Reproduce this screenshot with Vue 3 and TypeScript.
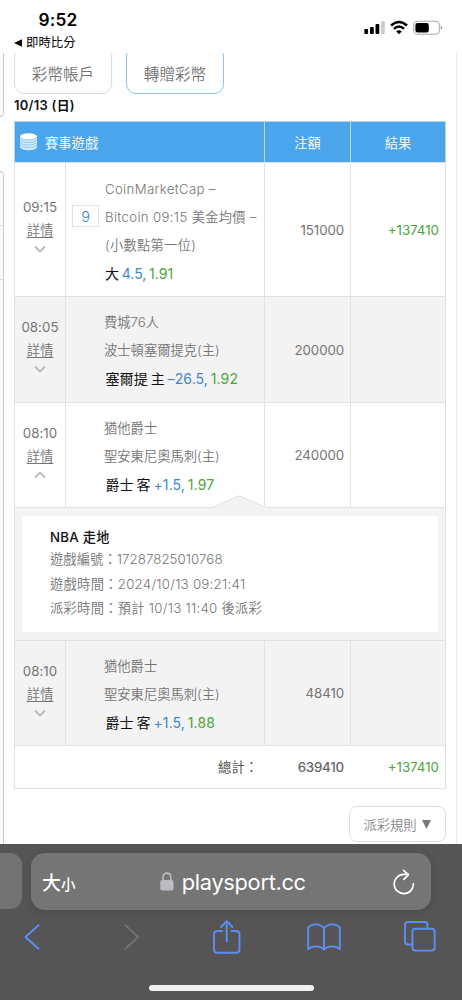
<script setup lang="ts">
import { ref, computed } from 'vue'

type Bet = {
  id: number
  time: string
  no?: string
  lines: string[]
  pick: string
  line: string
  odds: string
  amount: number
  result?: string
  shaded: boolean
}

const bets: Bet[] = [
  { id: 1, time: '09:15', no: '9', lines: ['CoinMarketCap –', 'Bitcoin 09:15 美金均價 –', '(小數點第一位)'], pick: '大', line: '4.5,', odds: '1.91', amount: 151000, result: '+137410', shaded: false },
  { id: 2, time: '08:05', lines: ['費城76人', '波士頓塞爾提克(主)'], pick: '塞爾提 主', line: '–26.5,', odds: '1.92', amount: 200000, shaded: true },
  { id: 3, time: '08:10', lines: ['猶他爵士', '聖安東尼奧馬刺(主)'], pick: '爵士 客', line: '+1.5,', odds: '1.97', amount: 240000, shaded: false },
  { id: 4, time: '08:10', lines: ['猶他爵士', '聖安東尼奧馬刺(主)'], pick: '爵士 客', line: '+1.5,', odds: '1.88', amount: 48410, shaded: true }
]

const info = [
  { label: '遊戲編號：', value: '17287825010768' },
  { label: '遊戲時間：', value: '2024/10/13 09:21:41' },
  { label: '派彩時間：', value: '預計 10/13 11:40 後派彩' }
]

const openId = ref<number | null>(3)
const total = computed(() => bets.reduce((sum, b) => sum + b.amount, 0))

function toggle(id: number) {
  openId.value = openId.value === id ? null : id
}
</script>

<template>
  <div class="phone">
    <header class="status">
      <div class="status-left">
        <div class="clock">9:52</div>
        <div class="back-app">
          <svg width="8" height="8" viewBox="0 0 8 8"><path d="M0 4 8 0.3V7.7Z" fill="#000" /></svg>
          <span>即時比分</span>
        </div>
      </div>
      <svg class="status-icons" width="80" height="16" viewBox="0 0 80 16">
        <rect x="0.3" y="9" width="3.8" height="5" rx="1" />
        <rect x="6" y="7" width="3.8" height="7" rx="1" />
        <rect x="11.5" y="4" width="3.8" height="10" rx="1" />
        <rect x="17" y="1.2" width="3.8" height="12.8" rx="1" fill="#ccc" />
        <g fill="none" stroke="#000" stroke-width="2.5">
          <path d="M27 5.5Q35 -1.6 43 5.5" />
          <path d="M30 8.8Q35 4.2 40 8.8" />
        </g>
        <path d="M35 14.3 32.2 11.4Q35 9.1 37.8 11.4Z" />
        <rect x="49.7" y="1.2" width="25.6" height="13" rx="3.8" fill="none" stroke="#aaa" stroke-width="1.1" />
        <rect x="51.4" y="2.9" width="13.4" height="9.6" rx="2.2" />
        <path d="M76.6 5.4Q79.6 7.5 76.6 9.8Z" fill="#999" />
      </svg>
    </header>

    <main class="page">
      <aside class="edge">
        <div class="edge-box top"></div>
        <div class="edge-box rest">
          <i></i>
          <i></i>
        </div>
      </aside>

      <section class="content">
        <div class="tabs">
          <button class="tab">彩幣帳戶</button>
          <button class="tab active">轉贈彩幣</button>
        </div>
        <h2 class="date">10/13 (日)</h2>

        <div class="table">
          <div class="row head">
            <div class="cell title">
              <svg width="17" height="18" viewBox="0 0 17 18">
                <path d="M0 3.2V13.8C0 18.4 17 18.4 17 13.8V3.2Z" fill="#d6ebfb" />
                <ellipse cx="8.5" cy="3.4" rx="8.5" ry="3.2" fill="#fff" />
                <g fill="none" stroke="#6fb7ef" stroke-width="0.7">
                  <path d="M0 4C1 8 16 8 17 4" />
                  <path d="M0 6.5C1 10.5 16 10.5 17 6.5" />
                  <path d="M0 9C1 13 16 13 17 9" />
                  <path d="M0 11.5C1 15.5 16 15.5 17 11.5" />
                </g>
              </svg>
              <span>賽事遊戲</span>
            </div>
            <div class="cell">注額</div>
            <div class="cell">結果</div>
          </div>

          <template v-for="b in bets" :key="b.id">
            <div class="row bet" :class="{ shaded: b.shaded, tall: b.no }">
              <div class="cell when" @click="toggle(b.id)">
                <span class="time">{{ b.time }}</span>
                <span class="more">詳情</span>
                <svg class="chevron" width="12" height="8" viewBox="0 0 12 8">
                  <path :d="openId === b.id ? 'M1 6.5 6 1.5 11 6.5' : 'M1 1.5 6 6.5 11 1.5'" />
                </svg>
              </div>
              <div class="cell game">
                <div class="no-col"><span v-if="b.no" class="no">{{ b.no }}</span></div>
                <div class="lines">
                  <div v-for="l in b.lines" :key="l" class="team">{{ l }}</div>
                  <div class="pick">{{ b.pick }} <span class="blue">{{ b.line }}</span> <span class="green">{{ b.odds }}</span></div>
                </div>
              </div>
              <div class="cell num">{{ b.amount }}</div>
              <div class="cell num green">{{ b.result }}</div>
            </div>

            <div v-if="openId === b.id" class="detail">
              <svg class="caret" width="54" height="13" viewBox="0 0 54 13">
                <path d="M0 12.5 27 0.8 54 12.5V13H0Z" fill="#f3f3f3" />
                <path d="M0 12.5 27 0.8 54 12.5" fill="none" stroke="#e1e1e1" />
              </svg>
              <div class="card">
                <div class="card-title">NBA 走地</div>
                <div v-for="i in info" :key="i.label" class="card-line">{{ i.label }}{{ i.value }}</div>
              </div>
            </div>
          </template>

          <div class="row total">
            <div class="cell sum-label">總計：</div>
            <div class="cell num strong">{{ total }}</div>
            <div class="cell num green">+137410</div>
          </div>
        </div>

        <button class="rules">派彩規則<svg width="9" height="9" viewBox="0 0 9 9"><path d="M0 0H9L4.5 9Z" fill="#777" /></svg></button>
      </section>
    </main>

    <footer class="browser">
      <div class="address-row">
        <div class="prev-tab"></div>
        <div class="address">
          <span class="aa">大<small>小</small></span>
          <span class="url">
            <svg width="14" height="19" viewBox="0 0 14 19">
              <rect x="0.3" y="8" width="13.2" height="10.6" rx="1.8" fill="#bcbbc3" />
              <path d="M3 8V5.2C3 -0.3 10.8 -0.3 10.8 5.2V8" fill="none" stroke="#bcbbc3" stroke-width="1.6" />
            </svg>
            <span class="host">playsport.cc</span>
          </span>
          <svg class="reload" width="22" height="26" viewBox="0 0 22 26" fill="none" stroke="#fff" stroke-width="1.7" stroke-linecap="round" stroke-linejoin="round">
            <path d="M20.4 14.6A9.6 9.6 0 1 1 10.8 5.4H15.2" />
            <path d="M10.6 1.4 15.4 5.9 10.8 10.4" />
          </svg>
        </div>
      </div>
      <nav class="tools">
        <svg width="16" height="26" viewBox="0 0 16 26"><path d="M14.5 1.3 1.5 13 14.5 24.7" /></svg>
        <svg class="off" width="16" height="26" viewBox="0 0 16 26"><path d="M1.5 1.3 14 13 1.5 24.7" /></svg>
        <svg width="28" height="34" viewBox="0 0 28 34">
          <path d="M9 11H4.3Q1 11 1 14.3V29.5Q1 32.8 4.3 32.8H23.2Q26.5 32.8 26.5 29.5V14.3Q26.5 11 23.2 11H18.5" />
          <path d="M13.7 21.5V1.3M8 7 13.7 1.2 19.4 7" />
        </svg>
        <svg width="34" height="28" viewBox="0 0 34 28">
          <path d="M17 5.3C13.5 0.2 5 0.2 1.2 4.5V26.2C5 22.3 13.5 22.3 17 26.7C20.5 22.3 29 22.3 32.8 26.2V4.5C29 0.2 20.5 0.2 17 5.3ZM17 5.3V26.7" />
        </svg>
        <svg width="32" height="31" viewBox="0 0 32 31">
          <path d="M8 23.5H4Q1 23.5 1 20.5V4Q1 1 4 1H20.5Q23.5 1 23.5 4V7.5" />
          <rect x="8.4" y="7.8" width="22.3" height="21.8" rx="3" />
        </svg>
      </nav>
      <div class="home-bar"></div>
    </footer>
  </div>
</template>

<style>
body {
  margin: 0;
  background: #fff;
}
</style>

<style scoped>
.phone {
  display: flex;
  flex-direction: column;
  width: 462px;
  height: 1000px;
  overflow: hidden;
  background: #fff;
  color: #757575;
  font-family: Inter, "Noto Sans CJK TC", sans-serif;
  font-size: 13.3px;
  font-weight: 350;
  white-space: nowrap;
}
button {
  font: inherit;
  color: inherit;
  background: #fff;
  padding: 0;
}
.status {
  flex: none;
  display: flex;
  justify-content: space-between;
  height: 53px;
  box-sizing: border-box;
  padding: 8px 18px 0 14px;
  color: #000;
}
.clock {
  padding-left: 24.5px;
  font-size: 17.3px;
  font-weight: 600;
  line-height: 23px;
  letter-spacing: .2px;
}
.back-app {
  display: flex;
  align-items: center;
  gap: 4px;
  margin-top: 2px;
  line-height: 20px;
  font-size: 12.4px;
  font-weight: 400;
}
.status-icons { margin-top: 12px; }

.page {
  flex: none;
  display: flex;
  height: 791px;
  overflow: hidden;
}
.edge {
  width: 4px;
  margin-right: 10px;
}
.edge-box {
  box-sizing: border-box;
  border-right: 1px solid #ccc;
  background: #fafafa;
}
.edge-box.top {
  height: 64px;
  border-bottom: 1px solid #bbb;
  border-bottom-right-radius: 4px;
}
.edge-box.rest {
  height: 673px;
  margin-top: 54px;
  border-top: 1px solid #bbb;
  border-top-right-radius: 4px;
}
.edge-box i {
  display: block;
  height: 53px;
  border-bottom: 1px solid #ddd;
}
.content {
  width: 442px;
  border-right: 1px solid #e8e8e8;
}
.tabs {
  display: flex;
  gap: 14px;
  margin-top: -7px;
}
.tab {
  box-sizing: border-box;
  width: 98px;
  height: 48px;
  border: 1px solid #ddd;
  border-radius: 10px;
  padding-top: 6px;
  font-size: 15.6px;
}
.tab.active { border-color: #84c5f3; }
.date {
  margin: 0;
  height: 27px;
  line-height: 23px;
  font-size: 12.9px;
  font-weight: 600;
  letter-spacing: .3px;
  color: #111;
}

.table {
  position: relative;
  box-sizing: border-box;
  width: 432px;
  border-bottom: 1px solid #e1e1e1;
}
.row {
  display: grid;
  grid-template-columns: 51px 199px 86px 96px;
}
.cell {
  box-sizing: border-box;
  border-top: 1px solid #e1e1e1;
  border-left: 1px solid #e1e1e1;
}
.cell:last-child { border-right: 1px solid #e1e1e1; }
.row.head {
  grid-template-columns: 250px 86px 96px;
  height: 41px;
  background: #4ba5ec;
  color: #fff;
}
.head .cell {
  display: flex;
  align-items: center;
  justify-content: center;
  border-color: #b9d5ea;
}
.head .title {
  justify-content: flex-start;
  gap: 8px;
  padding-left: 5px;
}
.bet { height: 105px; }
.bet.tall { height: 134px; }
.bet.tall + .bet { height: 106px; }
.shaded { background: #f3f3f3; }
.when {
  display: flex;
  flex-direction: column;
  align-items: center;
  justify-content: center;
  padding-bottom: 6px;
  line-height: 23px;
}
.time {
  font-weight: 400;
  letter-spacing: .05px;
}
.more { text-decoration: underline; text-underline-offset: 2px; }
.chevron {
  margin: 3px 0 4px;
  fill: none;
  stroke: #bbb;
  stroke-width: 1.9;
}
.game {
  display: flex;
  padding-top: 10.5px;
}
.tall .game { padding-top: 12px; }
.no-col {
  flex: none;
  width: 38px;
  padding: 30px 0 0 6px;
  box-sizing: border-box;
}
.no {
  display: block;
  box-sizing: border-box;
  width: 27px;
  height: 22px;
  border: 1px solid #e3e3e3;
  background: #fff;
  color: #3d85c6;
  font-size: 14.5px;
  text-align: center;
  line-height: 21px;
}
.tall .lines { padding-left: 1px; }
.team {
  height: 28px;
  line-height: 28px;
}
.tall .team {
  font-size: 13.2px;
  letter-spacing: .35px;
}
.pick {
  height: 30px;
  line-height: 30px;
  padding-left: 1.5px;
  color: #111;
  font-size: 14px;
  font-weight: 400;
  letter-spacing: .1px;
  word-spacing: -1.2px;
}
.tall .pick {
  padding-left: 0;
  letter-spacing: 0;
  word-spacing: -1.2px;
}
.blue { color: #3d88cb; }
.num {
  display: flex;
  align-items: center;
  justify-content: flex-end;
  padding-right: 6px;
  font-weight: 400;
  letter-spacing: -.1px;
}
.num:last-child {
  padding-right: 6px;
  letter-spacing: 0;
}
.green { color: #4ba63a; }

.detail {
  position: relative;
  box-sizing: border-box;
  height: 133px;
  padding: 8px 7px;
  border: solid #e1e1e1;
  border-width: 1px 1px 0;
  background: #f3f3f3;
}
.caret {
  position: absolute;
  top: -13px;
  left: 197px;
}
.card {
  box-sizing: border-box;
  height: 116px;
  padding: 10px 28px;
  background: #fff;
}
.card-title {
  height: 21px;
  line-height: 22px;
  color: #111;
  font-weight: 500;
  letter-spacing: .25px;
}
.card-line {
  height: 24.5px;
  line-height: 24.5px;
  letter-spacing: .25px;
}
.card-title + .card-line { letter-spacing: .05px; }
.row.total {
  grid-template-columns: 250px 86px 96px;
  grid-template-rows: 43px;
}
.total .cell { border-left-color: transparent; }
.total .sum-label {
  border-left-color: #e1e1e1;
  line-height: 42px;
  padding-right: 6px;
  text-align: right;
  color: #555;
  font-weight: 400;
}
.total .strong {
  color: #666;
  font-weight: 500;
  letter-spacing: -.2px;
}
.rules {
  box-sizing: border-box;
  display: flex;
  align-items: center;
  justify-content: center;
  gap: 5px;
  width: 97px;
  height: 36px;
  margin: 17px 0 0 334.5px;
  border: 1px solid #ddd;
  border-radius: 8px;
  color: #888;
}

.browser {
  flex: 1;
  background: #555;
  color: #fff;
}
.address-row {
  display: flex;
  gap: 9px;
  padding-top: 9px;
}
.prev-tab {
  width: 22px;
  height: 56px;
  border-radius: 0 12px 12px 0;
  background: #727272;
}
.address {
  display: flex;
  align-items: center;
  justify-content: space-between;
  box-sizing: border-box;
  width: 400px;
  height: 57px;
  padding: 0 16px 0 11px;
  border-radius: 14px;
  background: #757575;
  box-shadow: 0 2px 10px rgba(0, 0, 0, .13);
}
.aa {
  font-size: 19px;
  font-weight: 500;
}
.aa small { font-size: 14.5px; }
.url {
  display: flex;
  align-items: center;
  gap: 8px;
  margin-right: 3px;
  font-size: 21.8px;
  font-weight: 400;
}
.host { letter-spacing: -.3px; }
.tools {
  display: grid;
  grid-template-columns: 99.5px 89.5px 94px 97px 32px;
  align-items: center;
  height: 53px;
  padding-left: 24px;
}
.tools svg {
  fill: none;
  stroke: #5b8ff5;
  stroke-width: 1.9;
  stroke-linecap: round;
  stroke-linejoin: round;
}
.tools .off { stroke: #707070; }
.home-bar {
  width: 165px;
  height: 6px;
  margin: 22px auto 0;
  border-radius: 3px;
  background: #f1f1f1;
}
</style>
